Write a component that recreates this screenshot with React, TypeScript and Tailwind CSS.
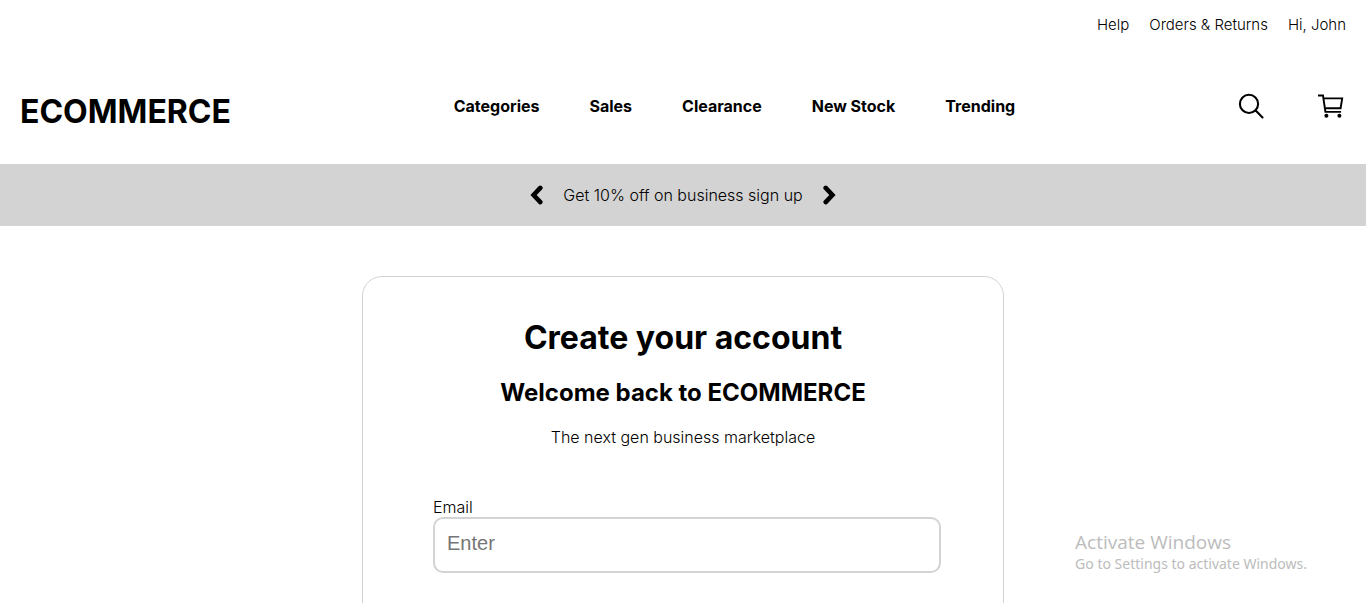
const links = ["Help", "Orders & Returns", "Hi, John"];
const categories = ["Categories", "Sales", "Clearance", "New Stock", "Trending"];

function SearchIcon() {
  return (
    <svg width="26" height="26" viewBox="0 0 26 26" fill="none" stroke="currentColor" strokeWidth="2.1" strokeLinecap="round" aria-hidden="true">
      <circle cx="11" cy="10.9" r="9.1" />
      <path d="M17.7 17.6 24.5 24.4" />
    </svg>
  );
}

function CartIcon() {
  return (
    <svg width="26" height="26" viewBox="0 0 26 26" fill="none" stroke="currentColor" strokeWidth="1.9" aria-hidden="true">
      <path d="M0 2.5H5L7.4 18.9H23M5.4 5.4H24.2L22.6 15.2H6.8" />
      <circle cx="8.4" cy="22.8" r="2" fill="currentColor" stroke="none" />
      <circle cx="21.4" cy="22.8" r="2" fill="currentColor" stroke="none" />
    </svg>
  );
}

function Chevron({ d }: { d: string }) {
  return (
    <svg width="14" height="20" viewBox="0 0 14 20" fill="none" stroke="currentColor" strokeWidth="4.6" aria-hidden="true">
      <path d={d} strokeLinecap="round" strokeLinejoin="miter" />
    </svg>
  );
}

export default function App() {
  return (
    <div className="relative h-screen overflow-hidden bg-white font-['Inter',sans-serif] text-black">
      <nav aria-label="Account" className="flex justify-end gap-5 px-5 pt-[13px] text-[15px] leading-6 font-light">
        {links.map((l) => (
          <a key={l} href="#">{l}</a>
        ))}
      </nav>
      <header className="flex items-start justify-between pt-[55px] pr-[22px] pb-8 pl-5">
        <a href="#" className="text-[32px] leading-10 font-bold">ECOMMERCE</a>
        <nav aria-label="Categories" className="flex gap-[50px] pt-0.5 text-base leading-6 font-bold">
          {categories.map((c) => (
            <a key={c} href="#">{c}</a>
          ))}
        </nav>
        <div className="flex gap-[54px] pt-px">
          <button type="button" aria-label="Search"><SearchIcon /></button>
          <button type="button" aria-label="Cart"><CartIcon /></button>
        </div>
      </header>
      <section aria-label="Offers" className="flex h-[62px] items-center justify-center gap-[19px] bg-[#d3d3d3]">
        <button type="button" aria-label="Previous offer"><Chevron d="M10.3 2.9 3.6 10l6.7 7.1" /></button>
        <p className="text-base font-light">Get 10% off on business sign up</p>
        <button type="button" aria-label="Next offer"><Chevron d="M3.7 2.9 10.4 10l-6.7 7.1" /></button>
      </section>
      <main className="mx-auto mt-[50px] w-full max-w-[642px] rounded-[20px] border border-[#d3d3d3] pr-[62px] pl-[70px] pt-[41px] pb-20">
        <div className="pr-2 text-center">
          <h1 className="text-[32px] leading-10 font-bold">Create your account</h1>
          <h2 className="mt-[19px] text-2xl leading-8 font-bold">Welcome back to ECOMMERCE</h2>
          <p className="mt-4 text-base leading-6 font-light">The next gen business marketplace</p>
        </div>
        <form className="mt-12">
          <label htmlFor="email" className="block text-base leading-5 font-light">Email</label>
          <input id="email" type="email" placeholder="Enter" className="h-14 w-full rounded-[10px] border-2 border-[#d3d3d3] px-3 pb-1 font-['Liberation_Sans',sans-serif] text-xl placeholder:text-[#757575]" />
        </form>
      </main>
      <aside className="pointer-events-none absolute right-[59px] bottom-[29px] font-['Noto_Sans',sans-serif] text-[#bcbcbc]">
        <p className="font-['Open_Sans',sans-serif] text-[19px] leading-6">Activate Windows</p>
        <p className="text-sm leading-5">Go to Settings to activate Windows.</p>
      </aside>
    </div>
  );
}
